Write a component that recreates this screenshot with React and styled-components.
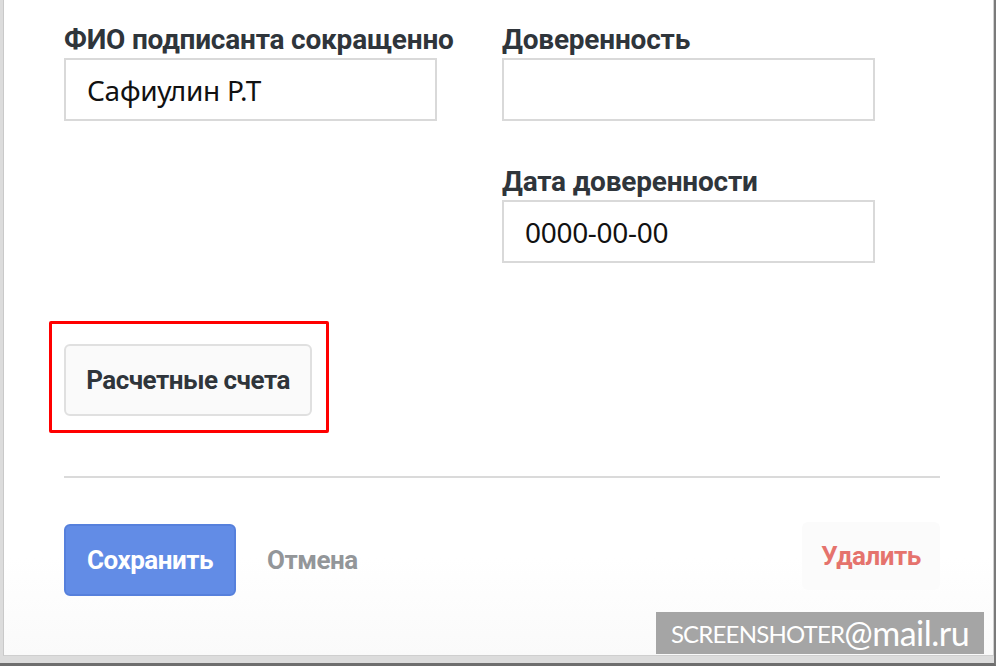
import React from "react";
import styled, { createGlobalStyle } from "styled-components";

const GlobalStyle = createGlobalStyle`
  html, body {
    margin: 0;
    padding: 0;
    background: #dcdcdc;
  }
  * {
    box-sizing: border-box;
  }
`;

const Screen = styled.div`
  position: relative;
  width: 996px;
  height: 666px;
  overflow: hidden;
  background: #dcdcdc;
  border-right: 2px solid #7a7a7a;
  border-bottom: 3px solid #6e6e6e;
`;

const Modal = styled.div`
  margin-left: 3px;
  width: 991px;
  height: 656px;
  background: linear-gradient(#ffffff 85%, #fafafa);
  border-left: 1px solid #c9c9c9;
  border-right: 1px solid #d0d0d0;
  border-bottom: 1px solid #cfcfcf;
  padding: 22px 52px 0 60px;
`;

const FieldsGrid = styled.div`
  display: grid;
  grid-template-columns: 373px 373px;
  column-gap: 65px;
  align-items: start;
`;

const Column = styled.div`
  display: flex;
  flex-direction: column;
  gap: 43px;
`;

const Field = styled.label`
  display: flex;
  flex-direction: column;
`;

const Label = styled.span`
  font-family: Roboto, "Noto Sans", sans-serif;
  font-weight: 700;
  font-size: 28px;
  letter-spacing: -0.2px;
  line-height: 36px;
  white-space: nowrap;
  color: #2f353b;
`;

const Input = styled.div`
  height: 63px;
  border: 2px solid #d9d9d9;
  background: #fff;
  padding: 0 21px;
  display: flex;
  align-items: center;
  font-family: "Noto Sans", sans-serif;
  font-size: 28px;
  letter-spacing: -0.3px;
  color: #111;
`;

const AccountsRow = styled.div`
  margin-top: 81px;
  display: flex;
`;

const Highlight = styled.div`
  position: relative;
  &::after {
    content: "";
    position: absolute;
    left: -15px;
    top: -23px;
    right: -17px;
    bottom: -17px;
    border: 3px solid #ff0000;
    border-radius: 2px;
    pointer-events: none;
  }
`;

const ButtonText = styled.button`
  font-family: Roboto, "Noto Sans", sans-serif;
  font-weight: 700;
  font-size: 26px;
  letter-spacing: -0.5px;
  cursor: pointer;
`;

const GhostButton = styled(ButtonText)`
  height: 72px;
  width: 248px;
  padding: 0;
  background: #fafafa;
  border: 2px solid #e0e0e0;
  border-radius: 6px;
  color: #2f353b;
`;

const Divider = styled.hr`
  margin: 60px 0 0;
  width: 876px;
  border: none;
  border-top: 2px solid #dadada;
`;

const Footer = styled.div`
  margin-top: 46px;
  width: 876px;
  display: flex;
  align-items: center;
`;

const PrimaryButton = styled(ButtonText)`
  height: 72px;
  width: 172px;
  padding: 0;
  background: #628ce6;
  border: 2px solid #5680dc;
  border-radius: 6px;
  color: #fff;
`;

const LinkButton = styled(ButtonText)`
  margin-left: 31px;
  background: none;
  border: none;
  padding: 0;
  color: ${(p) => p.$color};
`;

const DangerButton = styled(LinkButton)`
  margin-left: auto;
  height: 68px;
  width: 138px;
  background: #fbfbfb;
  border-radius: 6px;
  align-self: flex-start;
  margin-top: -2px;
`;

const Watermark = styled.div`
  position: absolute;
  left: 656px;
  top: 612px;
  width: 328px;
  height: 42px;
  background: #a5a5a5;
  color: #fff;
  display: flex;
  align-items: center;
  justify-content: center;
  font-family: Lato, "Noto Sans", sans-serif;
`;

const WmSmall = styled.span`
  font-size: 24px;
  letter-spacing: -0.8px;
`;

const WmBig = styled.span`
  font-size: 34px;
  line-height: 1;
  letter-spacing: -0.5px;
`;

export default function App() {
  return (
    <>
      <GlobalStyle />
      <Screen>
        <Modal>
          <FieldsGrid>
            <Column>
              <Field>
                <Label>ФИО подписанта сокращенно</Label>
                <Input>Сафиулин Р.Т</Input>
              </Field>
            </Column>
            <Column>
              <Field>
                <Label>Доверенность</Label>
                <Input />
              </Field>
              <Field>
                <Label>Дата доверенности</Label>
                <Input>0000-00-00</Input>
              </Field>
            </Column>
          </FieldsGrid>
          <AccountsRow>
            <Highlight>
              <GhostButton>Расчетные счета</GhostButton>
            </Highlight>
          </AccountsRow>
          <Divider />
          <Footer>
            <PrimaryButton>Сохранить</PrimaryButton>
            <LinkButton $color="#939699">Отмена</LinkButton>
            <DangerButton $color="#e5736d">Удалить</DangerButton>
          </Footer>
        </Modal>
        <Watermark>
          <WmSmall>SCREENSHOTER</WmSmall>
          <WmBig>@mail.ru</WmBig>
        </Watermark>
      </Screen>
    </>
  );
}
